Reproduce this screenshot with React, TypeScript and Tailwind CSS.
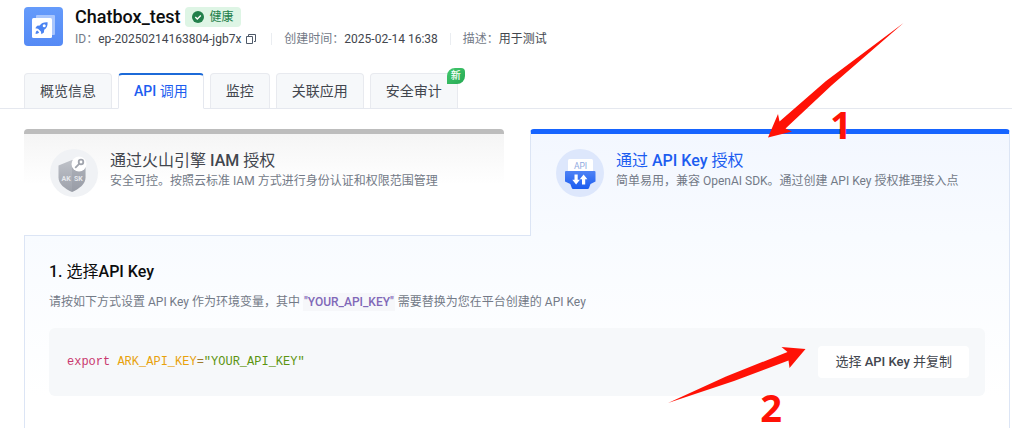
import React from "react";

const tabs = [
  { label: "概览信息" },
  { label: "API 调用", active: true },
  { label: "监控" },
  { label: "关联应用" },
  { label: "安全审计", isNew: true },
];

function AppLogo() {
  return (
    <svg viewBox="0 0 39 39" className="size-[39px] shrink-0" aria-hidden="true">
      <defs>
        <linearGradient id="logo" x1="0" y1="0" x2="0" y2="1">
          <stop offset="0" stopColor="#659bfb" />
          <stop offset="1" stopColor="#558af5" />
        </linearGradient>
      </defs>
      <rect width="39" height="39" rx="4" fill="url(#logo)" />
      <rect x="12" y="8" width="19" height="20" rx="1" fill="#a9c6fd" />
      <rect x="8" y="11" width="20" height="20" rx="1.5" fill="#fff" />
      <path
        d="M23.600 15.300c-4-.2-6.300.9-7.800 3.100l-2.700.3-1.800 2.500 2.700.5 2.900 2.900.5 2.700 2.500-1.800.3-2.700c2.500-1.700 3.600-3.700 3.400-7.500z"
        fill="#4a83f2"
      />
      <path d="M13.300 23.400c-1.300.4-1.700 1.700-1.700 3.500 1.800 0 3-.4 3.500-1.700z" fill="#4a83f2" />
      <circle cx="20.200" cy="18.700" r="1.500" fill="#fff" />
    </svg>
  );
}

function ShieldIcon() {
  return (
    <svg viewBox="0 0 48 48" className="size-12 shrink-0" aria-hidden="true">
      <defs>
        <linearGradient id="shield" x1="0" y1="0" x2="0" y2="1">
          <stop offset="0" stopColor="#bfc2c9" />
          <stop offset="1" stopColor="#9da1aa" />
        </linearGradient>
      </defs>
      <circle cx="24" cy="24" r="24" fill="#f0f2f5" />
      <path d="M8.500 16.500L22 11l13.500 5.500v12C35.500 35 29.500 39.500 22 43 14.500 39.500 8.500 35 8.500 28.500z" fill="url(#shield)" />
      <path d="M22 11l13.500 5.500v12C35.500 35 29.500 39.500 22 43z" fill="#8b909a" opacity=".28" />
      <circle cx="29" cy="15" r="7.500" fill="#fff" />
      <circle cx="31" cy="13" r="2.300" fill="none" stroke="#a0a4ad" strokeWidth="1.800" />
      <path d="M29.200 14.800l-4 4" fill="none" stroke="#a0a4ad" strokeWidth="1.800" />
      <text x="11.500" y="32" fontSize="7" fontWeight="700" fill="#e6e8ec" fontFamily="Roboto, sans-serif">AK</text>
      <text x="24" y="32" fontSize="7" fontWeight="700" fill="#e6e8ec" fontFamily="Roboto, sans-serif">SK</text>
    </svg>
  );
}

function ApiIcon() {
  return (
    <svg viewBox="0 0 48 48" className="size-12 shrink-0" aria-hidden="true">
      <defs>
        <linearGradient id="api" x1="0" y1="0" x2="0" y2="1">
          <stop offset="0" stopColor="#4e82f5" />
          <stop offset="1" stopColor="#1a5cf0" />
        </linearGradient>
      </defs>
      <circle cx="24" cy="24" r="24" fill="#dde7fc" />
      <rect x="12" y="10" width="25" height="14" rx="1.500" fill="#fff" />
      <text x="24.500" y="19.500" textAnchor="middle" fontSize="8.500" fill="#8fa9e0" fontFamily="Roboto, sans-serif">API</text>
      <path d="M10 22h28.500a1 1 0 0 1 1 1v9.500l-5 2.500-1.500 4a1.500 1.500 0 0 1-1.400 1H17.200a1.500 1.500 0 0 1-1.400-1l-1.500-4-5.300-2.500V23a1 1 0 0 1 1-1z" fill="url(#api)" />
      <path d="M18.500 25.500h3.200v5.200h2.200L20.100 35.500l-3.800-4.800h2.200zM26 35.500h3.200v-5.200h2.200L27.600 25.500l-3.800 4.800H26z" fill="#fff" />
    </svg>
  );
}

function CopyIcon() {
  return (
    <svg viewBox="0 0 12 12" className="size-3" fill="none" stroke="#4e5969" aria-hidden="true">
      <path d="M3.500 3V1.500h7v7H9" />
      <path d="M1.500 3.500h6v7h-6z" />
    </svg>
  );
}

export default function App() {
  return (
    <div className="font-[Roboto,'Noto_Sans_CJK_SC',sans-serif] bg-white text-[#1d2129] overflow-hidden">
      <header className="flex gap-3 pl-6 pt-[7px]">
        <AppLogo />
        <div className="flex flex-col">
          <div className="flex h-5 items-center gap-1">
            <h1 className="text-[18px] leading-5 font-medium text-[#0c0d0e]">Chatbox_test</h1>
            <span className="flex h-5 items-center gap-[6px] rounded-sm bg-[#def5e5] px-[7px] text-[12px] leading-5 text-[#22804b]">
              <svg viewBox="0 0 12 12" className="size-3" aria-hidden="true">
                <circle cx="6" cy="6" r="6" fill="#22804b" />
                <path d="M3.300 6.100l2 2 3.500-3.700" fill="none" stroke="#fff" strokeWidth="1.400" />
              </svg>
              健康
            </span>
          </div>
          <dl className="mt-[2px] flex h-5 items-center text-[12px] leading-5 text-[#42464e]">
            <dt className="text-[#737a87]">ID：</dt>
            <dd className="flex items-center gap-1">
              ep-20250214163804-jgb7x
              <button type="button" aria-label="复制" className="flex"><CopyIcon /></button>
            </dd>
            <dt className="ml-[14px] flex items-center text-[#737a87] before:mr-3 before:h-3 before:w-px before:bg-[#eaedf1]">创建时间：</dt>
            <dd>2025-02-14 16:38</dd>
            <dt className="ml-3 flex items-center text-[#737a87] before:mr-3 before:h-3 before:w-px before:bg-[#eaedf1]">描述：</dt>
            <dd>用于测试</dd>
          </dl>
        </div>
      </header>

      <nav className="mt-6 flex gap-[6px] border-b border-[#e5e8ef] pl-6" role="tablist" aria-label="接入点">
        {tabs.map((t) => (
          <button
            key={t.label}
            type="button"
            role="tab"
            aria-selected={!!t.active}
            className={
              t.active
                ? "relative -mb-px h-9 rounded-t border border-t-2 border-[#e5e8ef] border-t-[#1c6ad8] border-b-white bg-white px-[15px] pb-px text-[14px] leading-5 font-medium text-[#1c5df0]"
                : "relative h-[35px] rounded-t border border-b-0 border-[#e8eaef] bg-[#f6f8fa] px-[15px] text-[14px] leading-5 text-[#42464e]"
            }
          >
            {t.active ? <>API <span className="font-normal">调用</span></> : t.label}
            {t.isNew && (
              <span className="absolute -top-[6px] -right-2 h-4 w-[18px] rounded-tl-lg rounded-tr rounded-br-lg bg-linear-to-br from-[#43c96e] to-[#25a953] text-center text-[10px] leading-4 font-medium text-white">
                新
              </span>
            )}
          </button>
        ))}
      </nav>

      <main className="pl-6 pr-[2px] pt-5">
        <div className="grid grid-cols-2 gap-[26px]" role="tablist" aria-label="授权方式">
          <button
            type="button"
            role="tab"
            aria-selected="false"
            className="flex h-[106px] items-start gap-3 rounded-t border-t-[5px] border-[#bdbdbd] bg-linear-to-b from-[#f5f5f5] to-white to-50% px-[26px] pt-[15px] text-left"
          >
            <ShieldIcon />
            <span className="flex flex-col pt-px">
              <span className="text-[16px] leading-[22px] text-[#42464e]">通过火山引擎 <span className="font-medium">IAM</span> 授权</span>
              <span className="text-[12px] leading-[18px] text-[#737a87]">安全可控。按照云标准 IAM 方式进行身份认证和权限范围管理</span>
            </span>
          </button>
          <div className="relative z-10 -mb-px">
            <button
              type="button"
              role="tab"
              aria-selected="true"
              className="flex h-[107px] w-full items-start gap-3 rounded-t border-x border-t-[5px] border-x-[#dce5f5] border-t-[#1664ff] bg-linear-to-b from-[#f3f7ff] to-[#f8fbff] px-[25px] pt-[15px] text-left"
            >
              <ApiIcon />
              <span className="flex flex-col pt-px">
                <span className="text-[16px] leading-[22px] text-[#1c5df0]">通过 <span className="font-medium">API Key</span> 授权</span>
                <span className="text-[12px] leading-[18px] text-[#737a87]">简单易用，兼容 OpenAI SDK。通过创建 API Key 授权推理接入点</span>
              </span>
            </button>
            <svg viewBox="0 0 136 115" className="pointer-events-none absolute -top-[106px] left-[238px] h-[115px] w-[136px]" fill="#ff1206" aria-hidden="true">
              <path d="M135.500 0L58 58 11.500 98.500 10 91 0 114.500 24 108.500 17.500 105.500 64 62z" />
            </svg>
            <span className="pointer-events-none absolute -top-6 left-[300px] font-['Noto_Sans'] text-[38px] leading-[38px] font-bold text-[#ff1206]">1</span>
          </div>
        </div>

        <section className="border border-[#dce5f5] bg-linear-to-b from-[#f8fbff] to-white to-80% px-6 pt-6 pb-10">
          <h2 className="text-[16px] leading-6 font-medium text-[#0c0d0e]">1. <span className="font-normal">选择</span>API Key</h2>
          <p className="mt-2 text-[12px] leading-5 text-[#737a87]">
            请按如下方式设置 API Key 作为环境变量，其中{" "}
            <strong className="bg-[#f6f7fa] px-px py-[2px] font-medium text-[#8068b8]">"YOUR_API_KEY"</strong>{" "}
            需要替换为您在平台创建的 API Key
          </p>
          <div className="relative mt-4 flex h-[68px] items-center justify-between rounded-md bg-[#f6f8fa] pl-[18px] pr-4">
            <code className="font-['Liberation_Mono',monospace] text-[12px] leading-5 text-[#a07a2c]">
              <span className="text-[#c9376e]">export</span> <span className="text-[#e8a20c]">ARK_API_KEY</span>=
              <span className="text-[#5c9410]">"YOUR_API_KEY"</span>
            </code>
            <button type="button" className="h-8 rounded bg-white px-[17px] text-[13px] leading-5 text-[#42464e]">
              选择 <span className="font-medium">API Key</span> 并复制
            </button>
            <svg viewBox="0 0 138 57" className="pointer-events-none absolute top-[19px] right-[179px] h-[57px] w-[138px]" fill="#ff1206" aria-hidden="true">
              <path d="M0 56L58 29.500 119.500 5 113.500 0 137.500 2 121.500 21 120.500 13.500 66 34z" />
            </svg>
            <span className="pointer-events-none absolute top-[60px] right-[203px] font-['Noto_Sans'] text-[38px] leading-[38px] font-bold text-[#ff1206]">2</span>
          </div>
        </section>
      </main>
    </div>
  );
}
